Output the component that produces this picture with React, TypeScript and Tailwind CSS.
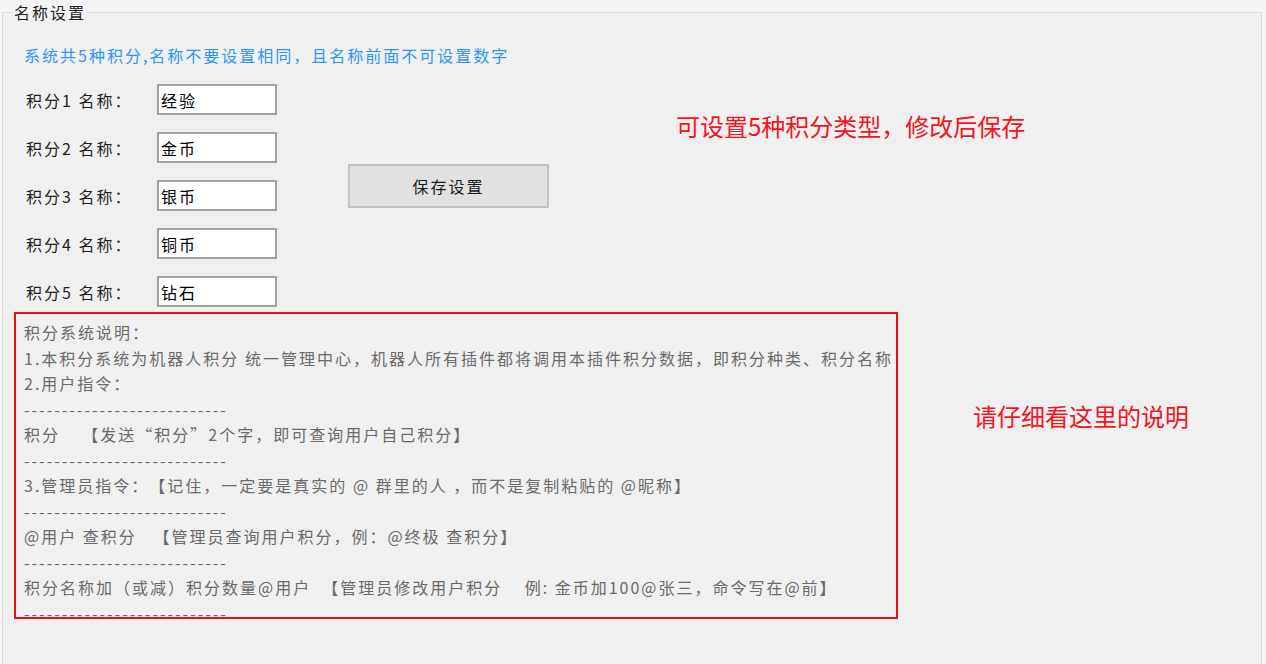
import React from "react";

const rows = [
  { label: "积分1 名称：", value: "经验" },
  { label: "积分2 名称：", value: "金币" },
  { label: "积分3 名称：", value: "银币" },
  { label: "积分4 名称：", value: "铜币" },
  { label: "积分5 名称：", value: "钻石" },
];

const dashes = "---------------------------";

const lines: string[] = [
  "积分系统说明：",
  "1.本积分系统为机器人积分 统一管理中心，机器人所有插件都将调用本插件积分数据，即积分种类、积分名称",
  "2.用户指令：",
  dashes,
  "积分    【发送“积分”2个字，即可查询用户自己积分】",
  dashes,
  "3.管理员指令：【记住，一定要是真实的 @ 群里的人 ，而不是复制粘贴的 @昵称】",
  dashes,
  "@用户 查积分   【管理员查询用户积分，例：@终极 查积分】",
  dashes,
  "积分名称加（或减）积分数量@用户  【管理员修改用户积分    例: 金币加100@张三，命令写在@前】",
  dashes,
];

export default function App() {
  return (
    <div className="w-[1266px] h-[664px] overflow-hidden bg-[#f4f4f4] font-[family-name:'Noto_Sans_CJK_SC',sans-serif] text-[16px] tracking-[2px] [text-spacing-trim:space-all]">
      <fieldset className="ml-[2px] w-[1260px] h-[720px] min-w-0 border border-[#dcdcdc] bg-[#f0f0f0]">
        <legend className="ml-[9px] px-[2px] leading-[24px] text-[#1f1f1f]">名称设置</legend>
        <div className="pl-[21px] mt-[19px] leading-[24px] text-[#2e96f5] whitespace-nowrap">
          系统共5种积分,名称不要设置相同，且名称前面不可设置数字
        </div>
        <div className="flex items-start mt-[17px]">
          <div className="flex flex-col gap-[17px] pl-[23px]">
            {rows.map((r) => (
              <div key={r.label} className="flex items-center h-[31px]">
                <span className="w-[131px] text-[#1f1f1f] leading-[24px] whitespace-nowrap">{r.label}</span>
                <div className="w-[120px] h-[31px] bg-white border-2 border-[#a2a2a2] flex items-center pl-[2px] text-black leading-[24px]">
                  {r.value}
                </div>
              </div>
            ))}
          </div>
          <button className="ml-[71px] mt-[80px] w-[201px] h-[44px] bg-[#e1e1e1] border-2 border-[#c2c2c2] text-[#1a1a1a] leading-[24px] flex items-center justify-center">
            保存设置
          </button>
          <div className="ml-[127px] mt-[26px] text-[24px] tracking-normal leading-[32px] text-[#f2141e] whitespace-nowrap">
            可设置5种积分类型，修改后保存
          </div>
        </div>
        <div className="flex items-start mt-[5px]">
          <div className="ml-[11px] w-[884px] h-[307px] border-2 border-[#e8101f] overflow-hidden pl-[8px] pt-[6px] text-[#6b6b6b]">
            {lines.map((l, i) => (
              <div key={i} className="leading-[25.5px] whitespace-pre">
                {l}
              </div>
            ))}
          </div>
          <div className="ml-[75px] mt-[88px] text-[24px] tracking-normal leading-[32px] text-[#f2141e] whitespace-nowrap">
            请仔细看这里的说明
          </div>
        </div>
      </fieldset>
    </div>
  );
}
